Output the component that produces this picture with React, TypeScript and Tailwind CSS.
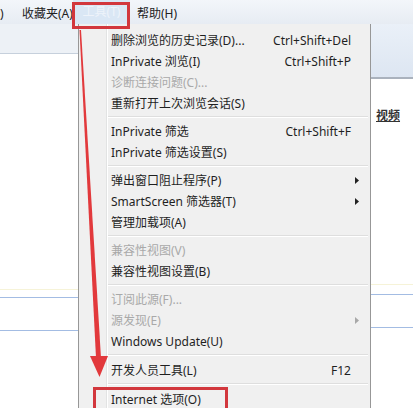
import React from 'react';

type Item = {
    label: string;
    shortcut?: string;
    disabled?: boolean;
    sub?: boolean;
};

// groups of menu entries, a separator goes between each group
const groups: Item[][] = [
    [
        { label: '删除浏览的历史记录(D)...', shortcut: 'Ctrl+Shift+Del' },
        { label: 'InPrivate 浏览(I)', shortcut: 'Ctrl+Shift+P' },
        { label: '诊断连接问题(C)...', disabled: true },
        { label: '重新打开上次浏览会话(S)' },
    ],
    [
        { label: 'InPrivate 筛选', shortcut: 'Ctrl+Shift+F' },
        { label: 'InPrivate 筛选设置(S)' },
    ],
    [
        { label: '弹出窗口阻止程序(P)', sub: true },
        { label: 'SmartScreen 筛选器(T)', sub: true },
        { label: '管理加载项(A)' },
    ],
    [
        { label: '兼容性视图(V)', disabled: true },
        { label: '兼容性视图设置(B)' },
    ],
    [
        { label: '订阅此源(F)...', disabled: true },
        { label: '源发现(E)', disabled: true, sub: true },
        { label: 'Windows Update(U)' },
    ],
    [{ label: '开发人员工具(L)', shortcut: 'F12' }],
    [{ label: 'Internet 选项(O)' }],
];

function SubArrow({ disabled }: { disabled?: boolean }) {
    return (
        <svg width="4" height="7" viewBox="0 0 4 7">
            <path d="M0 0 L4 3.5 L0 7 Z" fill={disabled ? '#a8a8a8' : '#222'} />
        </svg>
    );
}

function MenuRow({ item }: { item: Item }) {
    return (
        <div className={`h-[21px] flex items-center pl-[32px] pr-[11px] pt-[2px] ${item.disabled ? 'text-[#a9a9a9]' : 'text-[#1f1f1f]'}`}>
            <span className="flex-1 whitespace-nowrap">{item.label}</span>
            {item.shortcut && <span className="whitespace-nowrap">{item.shortcut}</span>}
            <span className="w-[8px] flex justify-end">{item.sub && <SubArrow disabled={item.disabled} />}</span>
        </div>
    );
}

export default function App() {
    return (
        <div className="relative w-[413px] h-[408px] overflow-hidden bg-white flex flex-col font-['Noto_Sans','Noto_Sans_CJK_SC',sans-serif] text-[12px] leading-none">
            {/* blurred title strip */}
            <div className="h-[4px] bg-[linear-gradient(to_right,#c9ced6,#d6dbe2_30%,#c4cbd6_55%,#b9c3d3_75%,#ccd2da)]" />

            {/* menu bar */}
            <div className="h-[24px] flex items-center pt-[3px] bg-[linear-gradient(to_bottom,#f3f6fa,#e7ecf3)] text-[#222]">
                <span className="w-[22px]">)</span>
                <span className="w-[51px]">收藏夹(A)</span>
                <span className="w-[57px] h-[27px] -mt-[6px] pt-[3px] flex items-center justify-center bg-[#dae7f5] text-[#eef3fa]">工具(T)</span>
                <span className="ml-[7px]">帮助(H)</span>
            </div>

            {/* content below menu bar */}
            <div className="flex-1 flex">
                {/* left page area */}
                <div className="w-[78px] flex flex-col">
                    <div className="h-[30px] bg-[#edf1f6] border-b border-[#c6d0dc]" />
                    <div className="h-[235px]" />
                    <div className="h-px bg-[#f6f3d8]" />
                    <div className="h-[7px]" />
                    <div className="h-px bg-[#a3bce3]" />
                    <div className="h-[32px]" />
                    <div className="h-px bg-[#a3bce3]" />
                </div>

                {/* tools dropdown */}
                <div className="w-[293px] border-x border-[#979797] pt-[5px] bg-[linear-gradient(to_right,#f0f0f0_27px,#e2e3e3_27px,#e2e3e3_28px,#ffffff_28px,#ffffff_29px,#f0f0f0_29px)]">
                    {groups.map((group, gi) => (
                        <div key={gi}>
                            {gi > 0 && (
                                <div className={`${gi > 4 ? 'h-[8px]' : 'h-[7px]'} flex flex-col justify-center pl-[29px] pr-[2px]`}>
                                    <div className="h-px bg-[#dedede]" />
                                    <div className="h-px bg-white" />
                                </div>
                            )}
                            {group.map((item) => (
                                <MenuRow key={item.label} item={item} />
                            ))}
                        </div>
                    ))}
                </div>

                {/* right page area */}
                <div className="flex-1 flex flex-col">
                    <div className="h-[55px] bg-[linear-gradient(to_bottom,#eaf0f8,#dde6f2)] border-b-2 border-[#aab2bd]" />
                    <div className="pl-[5px] pt-[31px] h-[205px]">
                        <span className="text-[#333] font-bold underline text-[12px]">视频</span>
                    </div>
                    <div className="h-px bg-[#f6f3d8]" />
                    <div className="h-[9px]" />
                    <div className="h-px bg-[#a3bce3]" />
                    <div className="h-[32px]" />
                    <div className="h-px bg-[#a3bce3]" />
                </div>
            </div>

            {/* red annotations */}
            <div className="absolute left-[72px] top-[2px] w-[58px] h-[27px] border-[3px] border-[#d2373d]" />
            <div className="absolute left-[93px] top-[387px] w-[135px] h-[30px] border-[3px] border-[#d2373d]" />
            <svg className="absolute left-0 top-0" width="413" height="408" viewBox="0 0 413 408">
                <polygon points="79.5,30 81,30 101,358 96,358" fill="#e2393c" />
                <polygon points="90,356 108,356 99.5,377" fill="#e2393c" />
            </svg>
        </div>
    );
}
